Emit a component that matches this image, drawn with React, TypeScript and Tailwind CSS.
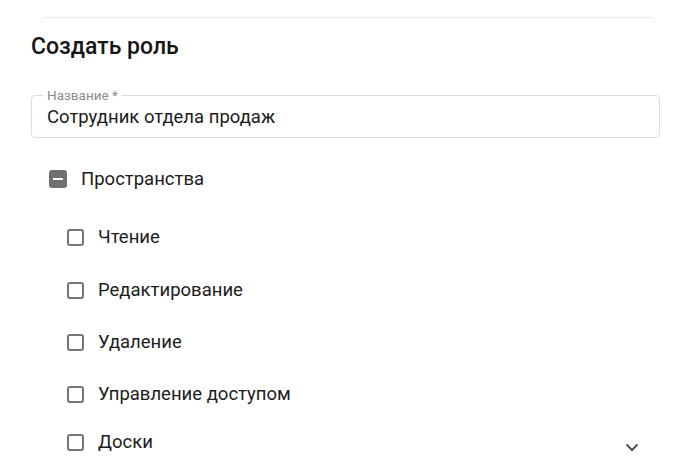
import React from "react";

function Box() {
  return <span className="block w-[17px] h-[17px] rounded-[3px] border-2 border-[#757575] bg-white shrink-0" />;
}

function Row({ label, mt }: { label: string; mt: string }) {
  return (
    <div className={`flex items-center h-[24px] pl-[67px] gap-[14px] ${mt}`}>
      <Box />
      <span className="text-[18.5px] leading-[24px] text-[#1c1c1c]">{label}</span>
    </div>
  );
}

export default function App() {
  return (
    <div className="w-[694px] h-[471px] bg-white overflow-hidden relative font-['Roboto',sans-serif]">
      <div className="pt-[17px] pl-[43px] pr-[41px]">
        <div className="h-px bg-[#ebebeb]" />
      </div>
      <h1 className="mt-[15px] pl-[31px] text-[23px] leading-[28px] font-medium text-[#161616]">Создать роль</h1>
      <div className="mt-[34px] ml-[31px] w-[629px] h-[43px] relative rounded-[4px] border border-[#dcdcdc] flex items-center pl-[15px]">
        <span className="absolute left-[11px] top-[-9px] bg-white px-[4px] text-[13.5px] leading-[16px] text-[#8c8c8c]">Название *</span>
        <span className="text-[18.5px] leading-[24px] text-[#1c1c1c] mt-[1px]">Сотрудник отдела продаж</span>
      </div>
      <div className="mt-[29px] flex items-center h-[24px] pl-[49px] gap-[14px]">
        <span className="w-[18px] h-[18px] rounded-[3px] bg-[#707070] flex items-center justify-center shrink-0">
          <span className="w-[10px] h-[2px] bg-white" />
        </span>
        <span className="text-[18.5px] leading-[24px] text-[#1c1c1c]">Пространства</span>
      </div>
      <Row label="Чтение" mt="mt-[34px]" />
      <Row label="Редактирование" mt="mt-[29px]" />
      <Row label="Удаление" mt="mt-[28px]" />
      <Row label="Управление доступом" mt="mt-[28px]" />
      <div className="flex items-center mt-[24px] pr-[55px]">
        <div className="flex items-center h-[24px] pl-[67px] gap-[14px] flex-1">
          <Box />
          <span className="text-[18.5px] leading-[24px] text-[#1c1c1c]">Доски</span>
        </div>
        <svg width="14" height="9" viewBox="0 0 14 9" className="mt-[10px]">
          <polyline points="1.5,1.5 7,7 12.5,1.5" fill="none" stroke="#555" strokeWidth="2" />
        </svg>
      </div>
    </div>
  );
}
